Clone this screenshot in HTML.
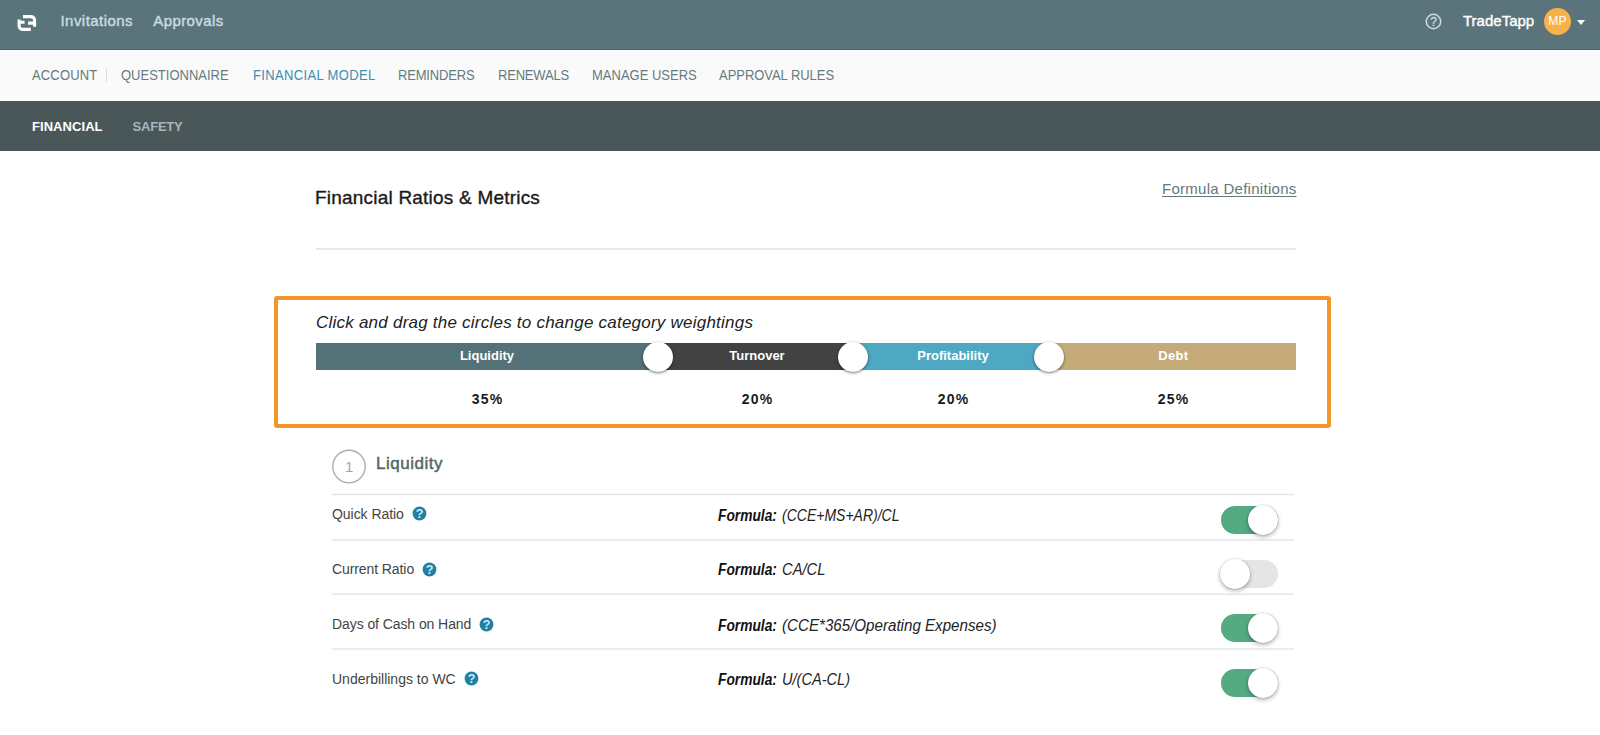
<!DOCTYPE html>
<html lang="en">
<head>
<meta charset="utf-8">
<title>TradeTapp - Financial Model</title>
<style>
*{box-sizing:border-box;margin:0;padding:0}
html,body{width:1600px;height:735px;overflow:hidden;background:#fff}
body{font-family:"Liberation Sans",sans-serif;color:#222;position:relative;-webkit-font-smoothing:antialiased}
.abs{position:absolute;white-space:nowrap;line-height:1}
#top{position:absolute;left:0;top:0;width:1600px;height:50px;background:#5b747b;border-bottom:1px solid #4d6568}
#nav2{position:absolute;left:0;top:50px;width:1600px;height:51px;background:#fafafa}
#nav3{position:absolute;left:0;top:101px;width:1600px;height:50px;background:#4a5759}
.t1{font-size:15px;color:#c6dde3;-webkit-text-stroke:0.4px #c6dde3}
.n2{font-size:13px;color:#667a7f;letter-spacing:0.6px;transform:scaleY(1.06);transform-origin:0 50%}
.n3{font-size:13px;letter-spacing:0.5px;font-weight:bold}
.hr{position:absolute;height:2px;background:#e6e7e8}
.lbl{font-size:13px;font-weight:bold;color:#fff;transform:translateX(-50%)}
.pct{font-size:14px;font-weight:bold;color:#1a1a1a;letter-spacing:1.2px;margin-left:0.6px;transform:translateX(-50%)}
.knob{position:absolute;width:30px;height:30px;border-radius:50%;background:#fff;box-shadow:0 1px 3px rgba(0,0,0,.55)}
.row{font-size:14px;color:#444}
.f{font-size:16px;font-style:italic;color:#222;transform-origin:left center}
.fb{font-weight:bold;color:#111}
.q{position:absolute;width:15px;height:15px}
.tg{position:absolute;left:1221px;width:57px;height:28px;border-radius:14px}
.tg.on{background:#54ab82}
.tg.off{background:#e4e5e6}
.tg i{position:absolute;top:-1px;width:30px;height:30px;border-radius:50%;background:#fff;box-shadow:0 0 0 .5px rgba(0,0,0,.12),0 2px 4px rgba(0,0,0,.3)}
.tg.on i{left:27px}
.tg.off i{left:-1px}
</style>
</head>
<body>
<div id="top"></div>
<svg class="abs" style="left:10px;top:5px" width="40" height="35" viewBox="10 5 40 35" fill="none" stroke="#fff" stroke-width="3.1" stroke-linecap="butt" stroke-linejoin="round">
<path d="M23 16.6 H30.4 Q34.6 16.6 34.6 20.8 V26.8 M34.6 23.1 H28.1"/>
<path d="M19.1 19.4 V25.2 Q19.1 29.4 23.3 29.4 H30.8 M19.1 22.2 H24.6"/>
</svg>
<div class="abs t1" style="left:60.5px;top:13px;letter-spacing:0.45px">Invitations</div>
<div class="abs t1" style="left:153.3px;top:13px;letter-spacing:0.4px">Approvals</div>
<svg class="abs" style="left:1425px;top:13px" width="17" height="17" viewBox="0 0 17 17"><circle cx="8.5" cy="8.5" r="7.2" fill="none" stroke="#c6dde3" stroke-width="1.5"/><text x="8.5" y="12.8" font-family="Liberation Sans, sans-serif" font-size="12" fill="#c6dde3" stroke="#c6dde3" stroke-width="0.3" text-anchor="middle">?</text></svg>
<div class="abs" style="left:1463px;top:13px;font-size:15px;color:#fff;letter-spacing:0px;-webkit-text-stroke:0.4px #fff">TradeTapp</div>
<div class="abs" style="left:1544px;top:8px;width:27px;height:27px;border-radius:50%;background:#f6b14b;color:#fff;font-size:12px;text-align:center;line-height:27.5px;letter-spacing:0.2px">MP</div>
<div class="abs" style="left:1577px;top:20px;width:0;height:0;border-left:4px solid transparent;border-right:4px solid transparent;border-top:5px solid #fff"></div>

<div id="nav2"></div>
<div class="abs n2" style="left:32px;top:69.3px;letter-spacing:0.15px">ACCOUNT</div>
<div class="abs" style="left:106px;top:68px;width:1px;height:14px;background:#dadddd"></div>
<div class="abs n2" style="left:121px;top:69.3px;letter-spacing:0.0px">QUESTIONNAIRE</div>
<div class="abs n2" style="left:253px;top:69.3px;color:#3f8fb0;letter-spacing:0.35px">FINANCIAL MODEL</div>
<div class="abs n2" style="left:398px;top:69.3px;letter-spacing:-0.18px">REMINDERS</div>
<div class="abs n2" style="left:498px;top:69.3px;letter-spacing:-0.2px">RENEWALS</div>
<div class="abs n2" style="left:592px;top:69.3px;letter-spacing:0.0px">MANAGE USERS</div>
<div class="abs n2" style="left:719px;top:69.3px;letter-spacing:-0.04px">APPROVAL RULES</div>

<div id="nav3"></div>
<div class="abs n3" style="left:32px;top:120px;color:#fff;letter-spacing:0.06px">FINANCIAL</div>
<div class="abs n3" style="left:132.5px;top:120px;color:#a9b5b8;letter-spacing:-0.2px">SAFETY</div>

<div class="abs" style="left:315px;top:187.5px;font-size:19px;color:#1a1a1a;letter-spacing:0.21px;-webkit-text-stroke:0.35px #1a1a1a">Financial Ratios &amp; Metrics</div>
<div class="abs" style="left:1162px;top:181px;font-size:15px;color:#65777b;letter-spacing:0.28px;text-decoration:underline;text-underline-offset:2px">Formula Definitions</div>
<div class="hr" style="left:316px;top:248px;width:980px;background:#e8e9ea"></div>

<div class="abs" style="left:274px;top:296px;width:1057px;height:132px;border:4px solid #f3952a;border-radius:3px"></div>
<div class="abs" style="left:316px;top:313.5px;font-size:17px;font-style:italic;color:#222;letter-spacing:0.23px">Click and drag the circles to change category weightings</div>
<div class="abs" style="left:316px;top:342.5px;width:980px;height:27.5px;background:linear-gradient(to right,#527277 0,#527277 341.5px,#424242 341.5px,#424242 537px,#4ea8c2 537px,#4ea8c2 732.5px,#c4ab79 732.5px)"></div>
<div class="knob" style="left:642.5px;top:341.5px"></div>
<div class="knob" style="left:838px;top:341.5px"></div>
<div class="knob" style="left:1033.5px;top:341.5px"></div>
<div class="abs lbl" style="left:487px;top:349px">Liquidity</div>
<div class="abs lbl" style="left:757px;top:349px">Turnover</div>
<div class="abs lbl" style="left:953px;top:349px">Profitability</div>
<div class="abs lbl" style="left:1173.3px;top:349px;letter-spacing:0.3px">Debt</div>
<div class="abs pct" style="left:487px;top:392px">35%</div>
<div class="abs pct" style="left:757px;top:392px">20%</div>
<div class="abs pct" style="left:953px;top:392px">20%</div>
<div class="abs pct" style="left:1173px;top:392px">25%</div>

<svg class="abs" style="left:330px;top:447px" width="38" height="39" viewBox="330 447 38 39"><circle cx="349" cy="466.5" r="16.2" fill="none" stroke="#a9b0b3" stroke-width="1.4"/><text x="349.2" y="471.8" font-family="Liberation Sans, sans-serif" font-size="15" fill="#9fa7aa" text-anchor="middle">1</text></svg>
<div class="abs" style="left:376px;top:455px;font-size:17px;color:#4f666b;letter-spacing:0.52px;-webkit-text-stroke:0.45px #4f666b">Liquidity</div>
<svg class="abs" style="left:332px;top:490px" width="962" height="165" viewBox="332 490 962 165"><g fill="#e2e4e5"><rect x="332" y="493.8" width="962" height="1.4"/><rect x="332" y="539.3" width="962" height="1.4"/><rect x="332" y="593.5" width="962" height="1.4"/><rect x="332" y="648.3" width="962" height="1.4"/></g></svg>

<div class="abs row" style="left:332px;top:507px;letter-spacing:-0.05px">Quick Ratio</div>
<div class="abs row" style="left:332px;top:561.5px;letter-spacing:-0.09px">Current Ratio</div>
<div class="abs row" style="left:332px;top:617px;letter-spacing:-0.08px">Days of Cash on Hand</div>
<div class="abs row" style="left:332px;top:672px">Underbillings to WC</div>

<svg class="q" style="left:411.5px;top:506px" viewBox="0 0 15 15"><circle cx="7.5" cy="7.5" r="6.9" fill="#217fa3"/><text x="7.5" y="12.1" font-family="Liberation Sans, sans-serif" font-size="12.5" font-weight="bold" fill="#c4f0fa" text-anchor="middle">?</text></svg>
<svg class="q" style="left:421.5px;top:561.5px" viewBox="0 0 15 15"><circle cx="7.5" cy="7.5" r="6.9" fill="#217fa3"/><text x="7.5" y="12.1" font-family="Liberation Sans, sans-serif" font-size="12.5" font-weight="bold" fill="#c4f0fa" text-anchor="middle">?</text></svg>
<svg class="q" style="left:478.5px;top:616.5px" viewBox="0 0 15 15"><circle cx="7.5" cy="7.5" r="6.9" fill="#217fa3"/><text x="7.5" y="12.1" font-family="Liberation Sans, sans-serif" font-size="12.5" font-weight="bold" fill="#c4f0fa" text-anchor="middle">?</text></svg>
<svg class="q" style="left:463.5px;top:671px" viewBox="0 0 15 15"><circle cx="7.5" cy="7.5" r="6.9" fill="#217fa3"/><text x="7.5" y="12.1" font-family="Liberation Sans, sans-serif" font-size="12.5" font-weight="bold" fill="#c4f0fa" text-anchor="middle">?</text></svg>

<div class="abs f fb" style="left:717.5px;top:508px;transform:scaleX(0.86)">Formula:</div>
<div class="abs f" style="left:782px;top:508px;transform:scaleX(0.875)">(CCE+MS+AR)/CL</div>
<div class="abs f fb" style="left:717.5px;top:561.5px;transform:scaleX(0.86)">Formula:</div>
<div class="abs f" style="left:782px;top:561.5px;transform:scaleX(0.92)">CA/CL</div>
<div class="abs f fb" style="left:717.5px;top:618px;transform:scaleX(0.86)">Formula:</div>
<div class="abs f" style="left:782px;top:618px;transform:scaleX(0.946)">(CCE*365/Operating Expenses)</div>
<div class="abs f fb" style="left:717.5px;top:671.8px;transform:scaleX(0.86)">Formula:</div>
<div class="abs f" style="left:782px;top:671.8px;transform:scaleX(0.911)">U/(CA-CL)</div>

<div class="tg on" style="top:505.5px"><i></i></div>
<div class="tg off" style="top:560px"><i></i></div>
<div class="tg on" style="top:614px"><i></i></div>
<div class="tg on" style="top:669px"><i></i></div>
</body>
</html>
